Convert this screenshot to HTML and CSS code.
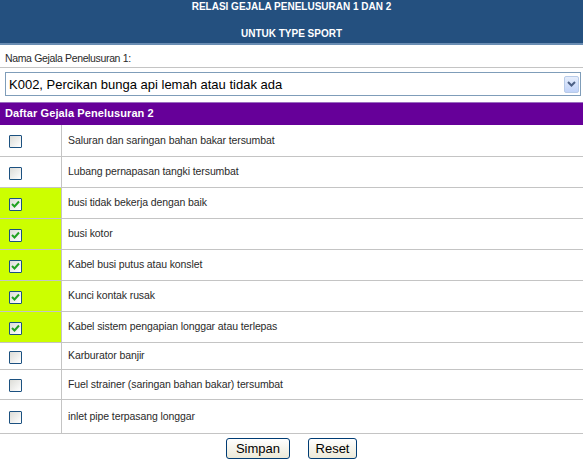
FILE: index.html
```html
<!DOCTYPE html>
<html>
<head>
<meta charset="utf-8">
<link rel="stylesheet" href="styles.css">
</head>
<body>
<div class="page">
  <div class="hdr">
    <div class="t1">RELASI GEJALA PENELUSURAN 1 DAN 2</div>
    <div class="t2">UNTUK TYPE SPORT</div>
  </div>
  <div class="label">Nama Gejala Penelusuran 1:</div>
  <div class="selrow">
    <div class="select">
      <span class="seltext">K002, Percikan bunga api lemah atau tidak ada</span>
      <span class="arrow"><svg width="9" height="6" viewBox="0 0 9 6"><path d="M1 1 L4.5 4.5 L8 1" fill="none" stroke="#4d6185" stroke-width="2"/></svg></span>
    </div>
  </div>
  <div class="band">Daftar Gejala Penelusuran 2</div>
  <div class="list">
    <div class="row r31"><div class="cb"><span class="box"></span></div><div class="txt">Saluran dan saringan bahan bakar tersumbat</div></div>
    <div class="row r31"><div class="cb"><span class="box"></span></div><div class="txt">Lubang pernapasan tangki tersumbat</div></div>
    <div class="row r31 on"><div class="cb"><span class="box"><svg width="9" height="8" viewBox="0 0 9 8"><path d="M1 4 L3.5 6.5 L8 1.5" fill="none" stroke="#21a121" stroke-width="2"/></svg></span></div><div class="txt">busi tidak bekerja dengan baik</div></div>
    <div class="row r31 on"><div class="cb"><span class="box"><svg width="9" height="8" viewBox="0 0 9 8"><path d="M1 4 L3.5 6.5 L8 1.5" fill="none" stroke="#21a121" stroke-width="2"/></svg></span></div><div class="txt">busi kotor</div></div>
    <div class="row r31 on"><div class="cb"><span class="box"><svg width="9" height="8" viewBox="0 0 9 8"><path d="M1 4 L3.5 6.5 L8 1.5" fill="none" stroke="#21a121" stroke-width="2"/></svg></span></div><div class="txt">Kabel busi putus atau konslet</div></div>
    <div class="row r31 on"><div class="cb"><span class="box"><svg width="9" height="8" viewBox="0 0 9 8"><path d="M1 4 L3.5 6.5 L8 1.5" fill="none" stroke="#21a121" stroke-width="2"/></svg></span></div><div class="txt">Kunci kontak rusak</div></div>
    <div class="row r31 on"><div class="cb"><span class="box"><svg width="9" height="8" viewBox="0 0 9 8"><path d="M1 4 L3.5 6.5 L8 1.5" fill="none" stroke="#21a121" stroke-width="2"/></svg></span></div><div class="txt">Kabel sistem pengapian longgar atau terlepas</div></div>
    <div class="row r27"><div class="cb"><span class="box"></span></div><div class="txt">Karburator banjir</div></div>
    <div class="row r30"><div class="cb"><span class="box"></span></div><div class="txt">Fuel strainer (saringan bahan bakar) tersumbat</div></div>
    <div class="row r34"><div class="cb"><span class="box"></span></div><div class="txt">inlet pipe terpasang longgar</div></div>
  </div>
  <div class="actions">
    <button class="btn b1">Simpan</button>
    <button class="btn b2">Reset</button>
  </div>
</div>
</body>
</html>
```
FILE: styles.css
```css
html, body {
  margin: 0;
  padding: 0;
  background: #fff;
}
.page {
  width: 583px;
  height: 467px;
  overflow: hidden;
  font-family: "Liberation Sans", Arial, sans-serif;
  font-size: 11px;
  color: #2a2a2a;
}
.hdr {
  height: 43px;
  background: #24507f;
  border-bottom: 2px solid #6a8db3;
  color: #fff;
  font-weight: bold;
  font-size: 10px;
  text-align: center;
}
.t1 {
  line-height: 12px;
  padding-top: 1px;
}
.t2 {
  line-height: 12px;
  margin-top: 15px;
}
.label {
  height: 23px;
  box-sizing: border-box;
  padding: 6px 0 0 5px;
  line-height: 14px;
  font-size: 10.5px;
  letter-spacing: -0.35px;
  border-bottom: 1px solid #c4c4c4;
}
.selrow {
  height: 34px;
  box-sizing: border-box;
  padding: 4px 2px 0 5px;
}
.select {
  height: 24px;
  box-sizing: border-box;
  border: 1px solid #7f9db9;
  display: flex;
  align-items: center;
  justify-content: space-between;
  padding: 0 1px 0 3px;
  font-size: 13px;
  color: #000;
}
.arrow {
  width: 15px;
  height: 17px;
  box-sizing: border-box;
  border: 1px solid #b8cbe8;
  border-radius: 2px;
  background: linear-gradient(#e6eefc, #c1d3f9);
  display: flex;
  align-items: center;
  justify-content: center;
}
.band {
  height: 23px;
  box-sizing: border-box;
  background: #660099;
  border-top: 1px solid #9a6cc0;
  color: #fff;
  font-weight: bold;
  padding-left: 5px;
  line-height: 21px;
  letter-spacing: 0.1px;
}
.list {
  border-bottom: 1px solid #c4c4c4;
}
.row {
  display: grid;
  grid-template-columns: 62px 1fr;
  box-sizing: border-box;
}
.row + .row {
  border-top: 1px solid #c4c4c4;
}
.r31 { height: 31px; }
.r27 { height: 27px; }
.r30 { height: 30px; }
.r34 { height: 34px; }
.cb {
  display: flex;
  align-items: center;
  padding-left: 9px;
  padding-top: 2px;
  border-right: 1px solid #c4c4c4;
}
.row.on .cb {
  background: #ccff00;
}
.box {
  width: 13px;
  height: 13px;
  box-sizing: border-box;
  border: 1px solid #1c5180;
  border-radius: 1px;
  background: linear-gradient(135deg, #dcdcd7, #ffffff);
  display: flex;
  align-items: center;
  justify-content: center;
}
.txt {
  display: flex;
  align-items: center;
  padding-left: 6px;
  padding-bottom: 2px;
  font-size: 10.5px;
  letter-spacing: -0.1px;
}
.actions {
  display: flex;
  justify-content: center;
  gap: 18px;
  padding-top: 4px;
}
.btn {
  height: 21px;
  box-sizing: border-box;
  border: 1px solid #003c74;
  border-radius: 3px;
  background: linear-gradient(#ffffff, #ece9d8);
  font-family: "Liberation Sans", Arial, sans-serif;
  font-size: 13px;
  color: #000;
  padding: 0;
  margin: 0;
}
.b1 { width: 64px; }
.b2 { width: 49px; }
```
